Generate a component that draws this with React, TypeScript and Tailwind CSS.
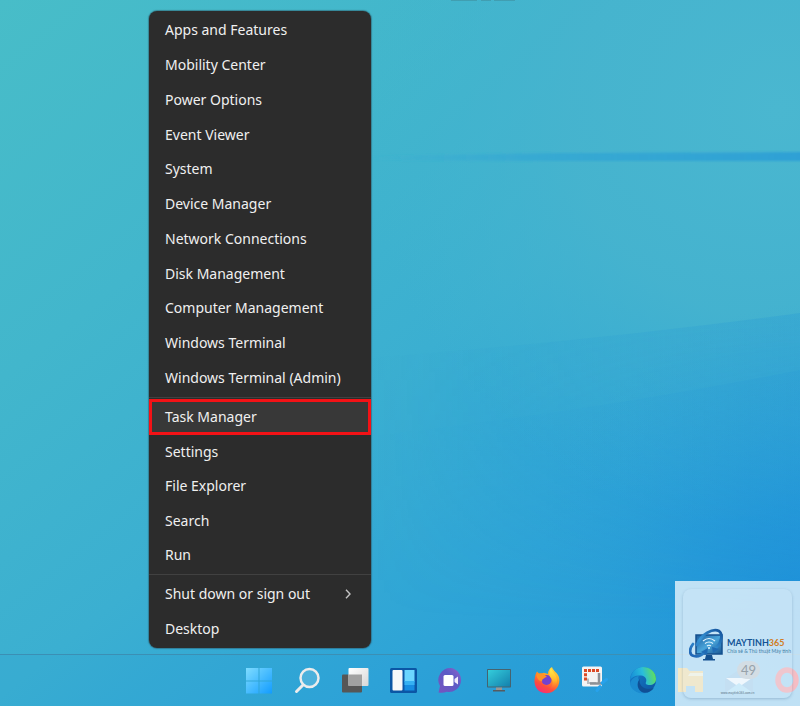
import type { ReactNode } from 'react';

const groups = [
  {
    height: 'h-[382px]',
    items: [
      'Apps and Features',
      'Mobility Center',
      'Power Options',
      'Event Viewer',
      'System',
      'Device Manager',
      'Network Connections',
      'Disk Management',
      'Computer Management',
      'Windows Terminal',
      'Windows Terminal (Admin)',
    ],
  },
  {
    height: 'h-[173px]',
    items: ['Task Manager', 'Settings', 'File Explorer', 'Search', 'Run'],
  },
  {
    height: 'h-[70px]',
    items: ['Shut down or sign out', 'Desktop'],
  },
];

function App() {
  return (
    <div className="relative isolate flex min-h-screen flex-col overflow-hidden bg-[#3bafd2] font-['Noto_Sans','Open_Sans',sans-serif]">
      <Wallpaper />
      <main className="flex-1 pt-[11px] pb-1.5 pl-[149px]">
        <PowerMenu />
      </main>
      <Taskbar />
      <Watermark />
    </div>
  );
}

function PowerMenu() {
  return (
    <div
      role="menu"
      aria-label="Power user menu"
      className="w-[222px] rounded-lg bg-[#2c2c2c] py-0.5 text-[14px] leading-5 text-[#f0f0f0] shadow-[0_0_1px_1px_rgba(40,80,95,0.5)]"
    >
      {groups.map((group, i) => (
        <div key={group.height}>
          {i > 0 && (
            <div role="separator" className="flex h-1 items-center">
              <span className="h-px w-full bg-[#414141]" />
            </div>
          )}
          <div className={`flex flex-col ${group.height}`}>
            {group.items.map((item) => (
              <MenuItem key={item} label={item} />
            ))}
          </div>
        </div>
      ))}
    </div>
  );
}

function MenuItem({ label }: { label: string }) {
  const active = label === 'Task Manager';
  const submenu = label === 'Shut down or sign out';

  return (
    <button
      type="button"
      role="menuitem"
      aria-haspopup={submenu ? 'menu' : undefined}
      className={`flex w-full items-center justify-between text-left whitespace-nowrap ${
        active ? 'h-9 shrink-0 border-3 border-[#f31216] bg-[#383838] px-[13px]' : 'flex-1 px-4'
      }`}
    >
      {label}
      {submenu && (
        <svg viewBox="0 0 12 12" className="size-3 text-[#c4c4c4]" fill="none" stroke="currentColor" strokeWidth="1.4">
          <path d="M3 1.8 L7 6 L3 10.2" />
        </svg>
      )}
    </button>
  );
}

function Wallpaper() {
  return (
    <svg
      viewBox="0 0 800 706"
      preserveAspectRatio="none"
      aria-hidden="true"
      className="absolute inset-0 -z-10 size-full"
    >
      <defs>
        <linearGradient id="sky" gradientUnits="userSpaceOnUse" x1="0" y1="0" x2="620" y2="760">
          <stop offset="0" stopColor="#48bdc8" />
          <stop offset="0.3" stopColor="#42b6cc" />
          <stop offset="0.55" stopColor="#3bafd1" />
          <stop offset="0.78" stopColor="#2ea4d7" />
          <stop offset="1" stopColor="#2398d9" />
        </linearGradient>
        <radialGradient id="deep" gradientUnits="userSpaceOnUse" cx="830" cy="620" r="320">
          <stop offset="0" stopColor="#1d8fd9" />
          <stop offset="0.4" stopColor="#2195da" stopOpacity="0.6" />
          <stop offset="1" stopColor="#30a4d6" stopOpacity="0" />
        </radialGradient>
        <radialGradient id="glow" gradientUnits="userSpaceOnUse" cx="780" cy="110" r="420">
          <stop offset="0" stopColor="#4ab7d0" />
          <stop offset="0.5" stopColor="#47b4ce" stopOpacity="0.85" />
          <stop offset="1" stopColor="#43b4ce" stopOpacity="0" />
        </radialGradient>
        <linearGradient id="streak" x1="0" x2="1" y1="0" y2="0">
          <stop offset="0" stopColor="#35a9d2" stopOpacity="0" />
          <stop offset="0.35" stopColor="#35a8d3" stopOpacity="0.8" />
          <stop offset="1" stopColor="#2fa0d5" />
        </linearGradient>
        <linearGradient id="fold" x1="0" x2="1" y1="0" y2="0">
          <stop offset="0" stopColor="#2597d6" stopOpacity="0" />
          <stop offset="1" stopColor="#2597d6" stopOpacity="0.3" />
        </linearGradient>
        <linearGradient id="fade" x1="0" x2="0" y1="0" y2="1">
          <stop offset="0" stopColor="#fff" />
          <stop offset="1" stopColor="#fff" stopOpacity="0" />
        </linearGradient>
        <mask id="foldMask" maskUnits="userSpaceOnUse" x="370" y="300" width="430" height="320">
          <rect x="370" y="300" width="430" height="320" fill="url(#fade)" />
        </mask>
        <filter id="soft" x="-10%" y="-100%" width="120%" height="300%">
          <feGaussianBlur stdDeviation="1" />
        </filter>
      </defs>
      <rect width="800" height="706" fill="url(#sky)" />
      <rect width="800" height="706" fill="url(#glow)" />
      <rect width="800" height="706" fill="url(#deep)" />
      <path d="M370 156 L560 153 L810 152 V161 L560 161 L370 160 Z" fill="url(#streak)" filter="url(#soft)" />
      <g mask="url(#foldMask)">
        <path d="M370 358 Q600 340 800 313 V620 H370 Z" fill="url(#fold)" />
        <path d="M370 436 Q600 410 800 370 V620 H370 Z" fill="url(#fold)" />
      </g>
      <path d="M451 0H515" stroke="#3e8795" strokeWidth="1" strokeDasharray="26 4 10 3" />
    </svg>
  );
}

function Taskbar() {
  return (
    <nav
      aria-label="Taskbar"
      className="flex h-[52px] overflow-hidden border-t border-[#3b8fb4] bg-[#269bd7]/15 pl-[235px]"
    >
      <TaskButton label="Start">
        <defs>
          <linearGradient id="win" x1="0" y1="0" x2="1" y2="1">
            <stop offset="0" stopColor="#7edcff" />
            <stop offset="1" stopColor="#129cff" />
          </linearGradient>
        </defs>
        <path d="M3 3h12.500v12.500H3zM16.500 3h12.500v12.500h-12.500zM3 16.500h12.500v12H3zM16.500 16.500h12.500v12h-12.500z" fill="url(#win)" />
      </TaskButton>
      <TaskButton label="Search">
        <circle cx="18.500" cy="13" r="9" fill="#8fd0ea" fillOpacity="0.3" stroke="#ececec" strokeWidth="2.500" />
        <path d="M12 20 L5.500 26.500" stroke="#ececec" strokeWidth="3" strokeLinecap="round" />
      </TaskButton>
      <TaskButton label="Task view">
        <defs>
          <linearGradient id="view" x1="0" y1="0" x2="1" y2="1">
            <stop offset="0" stopColor="#ffffff" />
            <stop offset="1" stopColor="#d7d7d7" />
          </linearGradient>
        </defs>
        <rect x="3" y="9.500" width="20" height="18" rx="1" fill="#565656" />
        <rect x="9.500" y="3" width="20" height="18" rx="1" fill="url(#view)" />
        <path d="M9.500 9.500H23V21H9.500z" fill="#a1a1a1" />
      </TaskButton>
      <TaskButton label="Widgets">
        <rect x="3" y="3" width="27" height="25" rx="1.500" fill="#0b56a5" />
        <rect x="5.500" y="5" width="10" height="20.500" rx="1" fill="#f7f8fa" />
        <path d="M17.500 5h10v12h-10z" fill="#6bd5ff" />
        <path d="M17.500 16h10v9.500h-10z" fill="#168de2" />
        <path d="M17.500 16h10v4h-10z" fill="#35b1f3" />
      </TaskButton>
      <TaskButton label="Chat">
        <defs>
          <linearGradient id="chat" x1="0" y1="1" x2="1" y2="0">
            <stop offset="0" stopColor="#7754bf" />
            <stop offset="0.6" stopColor="#5b5bc6" />
            <stop offset="1" stopColor="#9562ca" />
          </linearGradient>
        </defs>
        <path d="M16 3a12 12 0 1 1-4 23.800C9 28 6 28 3.500 27.500L5 21A12 12 0 0 1 16 3Z" fill="url(#chat)" />
        <rect x="8.500" y="10" width="10" height="11" rx="1.500" fill="#fff" />
        <path d="M19.500 14 L23 11.500V19.500L19.500 17z" fill="#f0ebfa" />
      </TaskButton>
      <TaskButton label="This PC">
        <defs>
          <linearGradient id="screen" x1="0" y1="0" x2="1" y2="1">
            <stop offset="0" stopColor="#34cddb" />
            <stop offset="1" stopColor="#1380ad" />
          </linearGradient>
        </defs>
        <rect x="4" y="4" width="24" height="18.500" rx="0.800" fill="#46636f" />
        <rect x="5" y="5" width="22" height="16.500" fill="url(#screen)" />
        <path d="M13 22.500h6v2.500h-6z" fill="#9b9692" />
        <path d="M10 25h12v1.500H10z" fill="#565b60" />
      </TaskButton>
      <TaskButton label="Firefox">
        <defs>
          <linearGradient id="fox" x1="0.800" y1="0" x2="0.300" y2="1">
            <stop offset="0" stopColor="#ffe342" />
            <stop offset="0.4" stopColor="#ff9a23" />
            <stop offset="0.75" stopColor="#ff4b3e" />
            <stop offset="1" stopColor="#f42e79" />
          </linearGradient>
          <linearGradient id="foxTail" x1="0" y1="0" x2="0" y2="1">
            <stop offset="0" stopColor="#fff14d" />
            <stop offset="0.6" stopColor="#ffb52b" />
            <stop offset="1" stopColor="#ff7139" stopOpacity="0" />
          </linearGradient>
        </defs>
        <path d="M6 6.500 8.500 9 13 7.800 17 9C17 6 18.500 3.500 21 2c.5 3 4.500 5 6.500 9 3 7-2 17.200-12 17.200S2 19 4 12c.3-2 1-4 2-5.500Z" fill="url(#fox)" />
        <circle cx="15.500" cy="15" r="5" fill="#7442cf" />
        <path d="M5.500 9.500C10 7 13 9 16 12c-2 .3-2.500 1.300-4 2-.8.600-1.200 1.600-.7 2.600C8 16 5.500 13.500 5.500 9.500Z" fill="#ff9226" />
        <path d="M20 3c1 4 6 6 6 13 0 5-4 8-7 8 3-4 3.500-8 1-11-2-2-2-6 0-10Z" fill="url(#foxTail)" />
      </TaskButton>
      <TaskButton label="Snipping Tool">
        <rect x="3" y="1.500" width="20" height="20" rx="1.500" fill="#f4f4f4" />
        <path
          d="M5 4h3v3H5zM9 4h3v3H9zM13 4h3v3h-3zM17 4h3v3h-3zM5 8.200h3v3H5zM5 12.400h3v3H5z"
          fill="#dc4a26"
        />
        <path d="M9 13.500v4.500h8" fill="none" stroke="#b9bcc0" strokeWidth="2" />
        <path d="M20 8v11.500M11 18.500h12" fill="none" stroke="#8d9196" strokeWidth="2.500" />
        <path d="M23 18 27.500 14.500M21 21.500l-3 4" stroke="#27a2ec" strokeWidth="3" strokeLinecap="round" />
      </TaskButton>
      <TaskButton label="Microsoft Edge">
        <defs>
          <linearGradient id="edgeTop" x1="0" y1="0.500" x2="1" y2="0.300">
            <stop offset="0" stopColor="#168cd6" />
            <stop offset="0.5" stopColor="#29bddc" />
            <stop offset="1" stopColor="#66e34f" />
          </linearGradient>
          <linearGradient id="edgeLow" x1="0" y1="0" x2="1" y2="1">
            <stop offset="0" stopColor="#1681cc" />
            <stop offset="1" stopColor="#0d53a1" />
          </linearGradient>
        </defs>
        <circle cx="16" cy="15" r="13" fill="url(#edgeLow)" />
        <path d="M3 15C4 7 9 2 16 2c8 0 13 6 13 12 0 4-3 6-6.500 6-3 0-4.500-1.200-3.500-3 1-2 0-6-5-6.500C9 10 5 12 3 15Z" fill="url(#edgeTop)" />
        <path d="M12 15c-3 6 2 13 10 12-6 3-15 1-18.500-6C2 16 7 11.500 12 11c-1 1-1 2.500 0 4Z" fill="#1b8bd0" />
        <path d="M13 14c-2 5 3 10 9 10 2 0 4-1 5-1.500-2 4-7 6-11 5-6-2-7-10-3-13.500Z" fill="#104f95" />
      </TaskButton>
      <TaskButton label="File Explorer">
        <path d="M3 3h9l2.500 3H28v21h-8v-6h-9v6H3z" fill="#ffb310" />
        <path d="M3 11h10l2-3h13v3z" fill="#ffe9a0" />
      </TaskButton>
      <TaskButton label="Mail">
        <path d="M2 14 16 5 30 14V28H2z" fill="#2282c7" />
        <path d="M3 13h26L16 22z" fill="#fff" />
        <path d="M2 28 16 18 30 28z" fill="#50c0ee" />
      </TaskButton>
      <TaskButton label="Opera">
        <ellipse cx="16" cy="15" rx="9" ry="10" fill="none" stroke="#ff0010" strokeWidth="5.500" />
      </TaskButton>
    </nav>
  );
}

function TaskButton({ label, children }: { label: string; children: ReactNode }) {
  return (
    <button type="button" aria-label={label} className="flex w-12 shrink-0 items-center justify-center">
      <svg viewBox="0 0 32 32" className="size-8">
        {children}
      </svg>
    </button>
  );
}

function Watermark() {
  return (
    <aside className="absolute right-0 bottom-0 size-[125px] bg-[#f2f9fe]/76 p-2 font-[Lato,sans-serif]">
      <span className="absolute top-20 right-10 rounded-full bg-[#d3dde4] px-1 text-[13px] leading-[18px] text-[#97a2aa]">
        49
      </span>
      <div className="flex h-full flex-col rounded-lg bg-[#d5edfa]/20 shadow-[0_1px_3px_rgba(90,130,165,0.4)]">
        <div className="flex flex-1 items-center gap-0.5 pt-3 pl-1.5">
          <svg viewBox="0 0 36 36" className="size-9 shrink-0" fill="none" aria-hidden="true">
            <defs>
              <linearGradient id="ring" x1="0" y1="1" x2="1" y2="0">
                <stop offset="0" stopColor="#1f62b2" />
                <stop offset="0.5" stopColor="#3796d7" />
                <stop offset="1" stopColor="#13529c" />
              </linearGradient>
              <linearGradient id="panel" x1="0" y1="0" x2="1" y2="1">
                <stop offset="0" stopColor="#1c5c9e" />
                <stop offset="0.5" stopColor="#4aa5da" />
                <stop offset="1" stopColor="#185592" />
              </linearGradient>
            </defs>
            <path d="M7 7h26v19H7z" fill="url(#panel)" stroke="#14508f" strokeWidth="1.500" />
            <path d="M17 27h6l1 4h-8zM14 31h12v1.500H14z" fill="#14508f" />
            <path
              d="M8 17C12 6 24 0 30 3c4 3 3 11-3 17M4 16c-4 5-4 11 1 12 4 1 8-1 11-4"
              stroke="url(#ring)"
              strokeWidth="2.800"
              strokeLinecap="round"
            />
            <path d="M12 24l7-4-1 7zM23 19l1 6 6-4z" fill="#1f6bb5" />
            <path d="M14 13q6-5 12 0M16 15.500q4-3 8 0M18 18q2-1.500 4 0" stroke="#e3f6ff" strokeWidth="1.200" />
            <circle cx="20" cy="20" r="1" fill="#e3f6ff" />
          </svg>
          <div className="whitespace-nowrap">
            <p className="text-[9px] leading-[10px] font-bold text-[#145495]">
              MAYTINH<span className="text-[#d17c25]">365</span>
            </p>
            <p className="text-[5px] leading-[7px] text-[#417ea6]">Chia sẻ &amp; Thủ thuật Máy tính</p>
          </div>
        </div>
        <a href="#website" className="pb-[3px] text-center text-[3px] leading-[4px] text-[#5d7588]">
          www.maytinh365.com.vn
        </a>
      </div>
    </aside>
  );
}

export default App;
